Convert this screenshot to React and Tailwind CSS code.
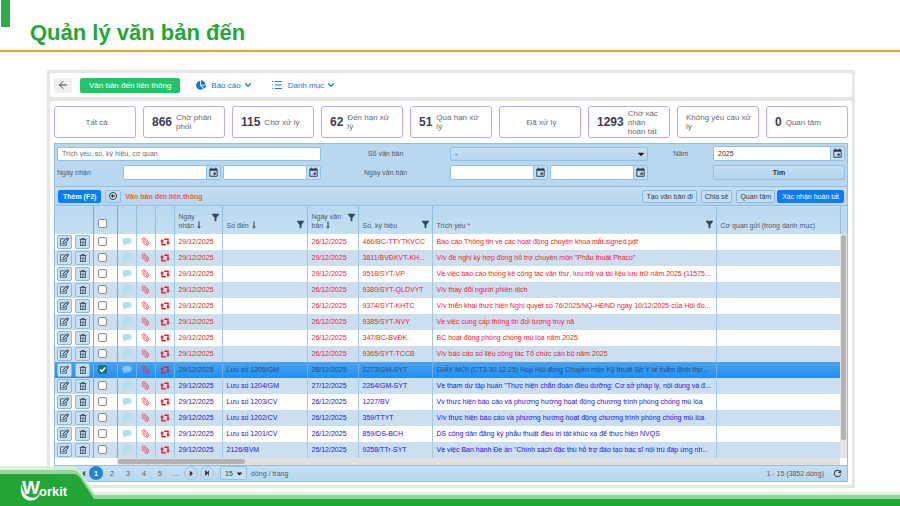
import clsx from "clsx";
import { FaRegEdit, FaRegTrashAlt, FaChartPie, FaLongArrowAltDown, FaStepBackward, FaStepForward, FaCaretLeft, FaCaretRight, FaCaretDown, FaRegArrowAltCircleLeft } from "react-icons/fa";
import { MdEvent, MdFilterAlt, MdRefresh } from "react-icons/md";
import { ArrowLeft, ChevronDown, List, Paperclip } from "lucide-react";

const stats = [
  { label: "Tất cả" },
  { count: 866, label: "Chờ phân phối" },
  { count: 115, label: "Chờ xử lý" },
  { count: 62, label: "Đến hạn xử lý" },
  { count: 51, label: "Quá hạn xử lý" },
  { label: "Đã xử lý" },
  { count: 1293, label: "Chờ xác nhận hoàn tất" },
  { label: "Không yêu cầu xử lý" },
  { count: 0, label: "Quan tâm" },
];

const rows = [
  { received: "29/12/2025", no: "", date: "26/12/2025", code: "466/BC-TTYTKVCC", title: "Báo cáo Thông tin về các hoạt động chuyên khoa mắt.signed.pdf", color: "red" },
  { received: "29/12/2025", no: "", date: "29/12/2025", code: "3811/BVĐKVT-KH...", title: "V/v đề nghị ký hợp đồng hỗ trợ chuyên môn \"Phẫu thuật Phaco\"", color: "red" },
  { received: "29/12/2025", no: "", date: "29/12/2025", code: "9518/SYT-VP", title: "Về việc báo cáo thống kê công tác văn thư, lưu trữ và tài liệu lưu trữ năm 2025 (11575...", color: "red" },
  { received: "29/12/2025", no: "", date: "26/12/2025", code: "9380/SYT-QLDVYT", title: "V/v thay đổi người phiên dịch", color: "red" },
  { received: "29/12/2025", no: "", date: "26/12/2025", code: "9374/SYT-KHTC", title: "V/v triển khai thực hiện Nghị quyết số 76/2025/NQ-HĐND ngày 10/12/2025 của Hội đồ...", color: "red" },
  { received: "29/12/2025", no: "", date: "26/12/2025", code: "9385/SYT-NVY", title: "Về việc cung cấp thông tin đối tượng truy nã", color: "red" },
  { received: "29/12/2025", no: "", date: "26/12/2025", code: "347/BC-BVĐK", title: "BC hoạt động phòng chống mù lòa năm 2025", color: "red" },
  { received: "29/12/2025", no: "", date: "26/12/2025", code: "9365/SYT-TCCB", title: "V/v báo cáo số liệu công tác Tổ chức cán bộ năm 2025", color: "red" },
  { received: "29/12/2025", no: "Lưu số 1205/GM", date: "28/12/2025", code: "2273/GM-SYT", title: "GIẤY MỜI (CT3-30.12.25) Họp Hội đồng Chuyên môn Kỹ thuật Sở Y tế thẩm định thự...", selected: true },
  { received: "29/12/2025", no: "Lưu số 1204/GM", date: "27/12/2025", code: "2264/GM-SYT", title: "Về tham dự tập huấn \"Thực hiện chẩn đoán điều dưỡng: Cơ sở pháp lý, nội dung và đ...", color: "blue" },
  { received: "29/12/2025", no: "Lưu số 1203/CV", date: "26/12/2025", code: "1227/BV", title: "Vv thực hiện báo cáo và phương hướng hoạt động chương trình phòng chống mù lòa", color: "blue" },
  { received: "29/12/2025", no: "Lưu số 1202/CV", date: "26/12/2025", code: "359/TTYT", title: "V/v thực hiện báo cáo và phương hướng hoạt động chương trình phòng chống mù lòa", color: "blue" },
  { received: "29/12/2025", no: "Lưu số 1201/CV", date: "26/12/2025", code: "859/DS-BCH", title: "DS công dân đăng ký phẫu thuật điều trị tật khúc xạ để thực hiện NVQS", color: "blue" },
  { received: "29/12/2025", no: "2126/BVM", date: "25/12/2025", code: "9258/TTr-SYT", title: "Về việc Ban hành Đề án \"Chính sách đặc thù hỗ trợ đào tạo bác sĩ nội trú đáp ứng nh...", color: "blue" },
];

function CommentIcon() {
  return (
    <svg width="10" height="9" viewBox="0 0 10 9" className="mx-auto" fill="currentColor">
      <ellipse cx="5" cy="4" rx="4.6" ry="3.2" />
      <path d="M1.8 5.5C1.9 7 1.4 7.7.8 8.3 2.2 8.3 3.6 7.8 4.4 6.8Z" />
    </svg>
  );
}

function RetweetIcon() {
  return (
    <svg width="10" height="8" viewBox="0 0 10 8" className="mx-auto" fill="none" stroke="currentColor" strokeWidth="1.4">
      <path d="M2 3V6.7H5.8M8 5V1.3H4.2" />
      <path d="M0 3.4 2 .9 4 3.4ZM6 4.6 8 7.1 10 4.6Z" fill="currentColor" stroke="none" />
    </svg>
  );
}

function DateField({ label, value, id }) {
  return (
    <div className="flex h-[15px] min-w-0 flex-1 rounded-[2px] border border-[#93bfe0] bg-white">
      <input id={id} aria-label={label} defaultValue={value} className="min-w-0 flex-1 px-1 text-[#333] outline-none" />
      <button type="button" aria-label={`Chọn ${label}`} className="flex w-[14px] items-center justify-center border-l border-[#93bfe0] bg-[#c3ddf2] text-[#2b3b4b]">
        <MdEvent size={11} />
      </button>
    </div>
  );
}

function HeadCell({ children, filter, sort, top }) {
  return (
    <th className="h-[28px] border-l border-[#93bfe0] px-1 pb-1 text-left align-bottom font-normal">
      <div className={clsx("flex justify-between", top ? "items-start" : "items-end")}>
        <span>
          {children}
          {sort && <FaLongArrowAltDown size={8} className="ml-px inline align-text-bottom" />}
        </span>
        {filter && <MdFilterAlt size={11} className="-mr-[3px] shrink-0 text-[#34475c]" />}
      </div>
    </th>
  );
}

function ToolButton({ children, primary }) {
  return (
    <button
      className={clsx(
        "h-[13px] rounded-[2px] border whitespace-nowrap",
        primary ? "border-[#0a7cff] bg-[#0a7cff] px-1 text-white" : "border-[#8db8da] bg-[#c3def2] px-[3px] text-[#2c3e50]"
      )}
    >
      {children}
    </button>
  );
}

function CheckBox({ label, checked }) {
  return (
    <span className="relative block size-[9px]">
      <input
        type="checkbox"
        aria-label={label}
        defaultChecked={checked}
        className="peer block size-[9px] appearance-none rounded-[2px] border border-[#8a8f96] bg-white checked:border-[#12757c] checked:bg-[#12757c]"
      />
      <svg viewBox="0 0 9 9" className="pointer-events-none absolute inset-0 hidden peer-checked:block">
        <path d="M2 4.6 3.8 6.5 7.2 2.4" fill="none" stroke="#fff" strokeWidth="1.5" />
      </svg>
    </span>
  );
}

function Row({ row }) {
  const cell = "truncate border-l px-1";
  const line = row.selected ? "border-[#6bb3ee]" : "border-[#a3c8e4]";
  return (
    <tr
      className={clsx(
        "h-4",
        row.selected ? "bg-linear-to-b from-[#4aa3e8] to-[#1f8efb] text-[#1c5080]" : "odd:bg-white even:bg-[#cbdff0]",
        row.color === "red" && "text-[#f5192a]",
        row.color === "blue" && "text-[#1c12e8]"
      )}
    >
      <td>
        <div className="flex gap-[3px] pl-[2px]">
          <button aria-label="Sửa" className="flex h-[14px] w-[15px] items-center justify-center rounded-[2px] border border-[#8db8da] bg-[#c9e0f3] text-[#2c3e50]">
            <FaRegEdit size={9} />
          </button>
          <button aria-label="Xóa" className="flex h-[14px] w-[15px] items-center justify-center rounded-[2px] border border-[#8db8da] bg-[#c9e0f3] text-[#2c3e50]">
            <FaRegTrashAlt size={8} />
          </button>
        </div>
      </td>
      <td className={clsx("border-l pl-1", row.selected ? "border-[#6bb3ee]" : "border-[#7fa9c9]")}>
        <CheckBox label="Chọn dòng" checked={row.selected} />
      </td>
      <td className={clsx("border-l", row.selected ? "border-[#6bb3ee] text-[#7cc8f2]" : "border-[#7fa9c9] text-[#b2dfe9]")}>
        <CommentIcon />
      </td>
      <td className={clsx("border-l text-[#e8283a]", line)}>
        <Paperclip size={9} strokeWidth={2} className="mx-auto -scale-x-100" />
      </td>
      <td className={clsx("border-l text-[#ec1c2e]", line)}>
        <RetweetIcon />
      </td>
      <td className={clsx(cell, line)}>{row.received}</td>
      <td className={clsx(cell, line)}>{row.no}</td>
      <td className={clsx(cell, line)}>{row.date}</td>
      <td className={clsx(cell, line)}>{row.code}</td>
      <td className={clsx(cell, line)}>{row.title}</td>
      <td className={clsx(cell, line)}></td>
    </tr>
  );
}

function Footer() {
  return (
    <footer className="pointer-events-none absolute inset-x-0 bottom-0 flex h-[42px] items-end">
      <svg width="110" height="42" viewBox="0 0 110 42" className="shrink-0 font-['Liberation_Sans',Arial,sans-serif]">
        <path d="M0 1H70Q77 1 80 6L95 27H110V42H0Z" fill="#d4f0d2" fillOpacity="0.8" />
        <path d="M0 5H72Q77 5 80 9L94 30H110V42H0Z" fill="#8ed397" fillOpacity="0.9" />
        <path d="M0 9H73Q78 9 81 14L94 34H110V42H0Z" fill="#23a638" />
        <path d="M0 41.5H110" stroke="#128a4e" />
        <path d="M21.5 19C19 28 23 35.5 31 35.5C36 35.5 39.5 32 40 27.5C38 31.5 34.5 33.2 31 32.6C25 31.5 22.5 26 21.5 19Z" fill="#fff" />
        <text x="22" y="29" fill="#fff" fontSize="19" fontWeight="700">W</text>
        <text x="39" y="31" fill="#fff" fontSize="13" fontWeight="700">orkit</text>
      </svg>
      <div className="flex-1">
        <div className="h-[3px] bg-[#dbf3d9]" />
        <div className="h-1 bg-[#93d69b]" />
        <div className="h-[7px] bg-[#23a638]" />
        <div className="h-px bg-[#128a4e]" />
      </div>
    </footer>
  );
}

export default function App() {
  return (
    <div className="relative min-h-screen bg-white pb-[19px] font-['Liberation_Sans',Arial,sans-serif] text-[7px] leading-[9px] text-[#4d5b6b]">
      <header className="flex h-[52px] border-b-2 border-[#f9a12e]">
        <div className="ml-px h-[27px] w-[9px] bg-[#2eac4c]" />
        <h1 className="mt-[19px] ml-5 text-[22px] leading-[27px] font-bold text-[#23a638]">Quản lý văn bản đến</h1>
      </header>

      <main className="mt-[18px] mr-[45px] ml-[47px] flex flex-col gap-1 border-[3px] border-[#e6e7e9] bg-[#e6e7e9]">
        <nav className="flex h-6 items-center rounded-[3px] bg-white px-1 text-[8px] text-[#1a73e0]">
          <button aria-label="Quay lại" className="flex h-[15px] w-[18px] items-center justify-center rounded-[2px] bg-[#f0f0f1] text-[#444]">
            <ArrowLeft size={12} strokeWidth={2} />
          </button>
          <button className="ml-2 h-[15px] rounded-[2px] bg-[#22c56b] px-[9px] text-white shadow-sm">Văn bản đến liên thông</button>
          <button className="ml-4 flex items-center">
            <FaChartPie size={10} />
            <span className="ml-[5px]">Báo cáo</span>
            <ChevronDown size={10} strokeWidth={3} className="ml-[2px]" />
          </button>
          <button className="ml-[18px] flex items-center">
            <List size={12} strokeWidth={2} />
            <span className="ml-[5px]">Danh mục</span>
            <ChevronDown size={10} strokeWidth={3} className="ml-[2px]" />
          </button>
        </nav>

        <section className="rounded-[3px] bg-white px-1 pt-[5px] pb-[3px]">
          <div className="grid grid-cols-9 gap-[7px]">
            {stats.map((s) => (
              <button
                key={s.label}
                className={clsx(
                  "flex h-8 items-center gap-1 rounded-[3px] border border-[#b5aef0] pr-[5px] pl-2 text-left text-[8px] leading-[9px] text-[#666b76]",
                  (s.label === "Tất cả" || s.label === "Đã xử lý") && "justify-center"
                )}
              >
                {s.count !== undefined && <b className="text-[12px] text-[#3f3d56]">{s.count}</b>}
                <span>{s.label}</span>
              </button>
            ))}
          </div>

          <div className="mt-[5px] border border-[#93bfe0] bg-[#b9d8ef]">
            <form className="grid grid-cols-[264px_2fr_198px_1fr_132px] items-center gap-y-1 px-[2px] pt-[2px] pb-[6px]">
              <input
                aria-label="Từ khóa"
                placeholder="Trích yếu, số, ký hiệu, cơ quan"
                className="h-[14px] rounded-[2px] border border-[#93bfe0] bg-white px-1 outline-none placeholder:text-[#6b7280]"
              />
              <label htmlFor="book" className="text-center">Sổ văn bản</label>
              <div className="relative">
                <select id="book" className="h-[14px] w-full appearance-none rounded-[2px] border border-[#93bfe0] bg-linear-to-b from-[#c8e0f3] to-[#b5d4ec] px-1 text-[#333]">
                  <option>-</option>
                </select>
                <FaCaretDown size={10} className="pointer-events-none absolute top-[2px] right-[2px] text-[#222]" />
              </div>
              <label htmlFor="year" className="text-center">Năm</label>
              <DateField id="year" label="năm" value="2025" />

              <div className="flex items-center gap-[2px]">
                <span className="w-[64px]">Ngày nhận</span>
                <DateField label="ngày nhận từ" />
                <DateField label="ngày nhận đến" />
              </div>
              <span className="text-center">Ngày văn bản</span>
              <div className="flex gap-[2px]">
                <DateField label="ngày văn bản từ" />
                <DateField label="ngày văn bản đến" />
              </div>
              <span />
              <button type="button" className="h-[15px] rounded-[2px] border border-[#93bfe0] bg-linear-to-b from-[#c5dff3] to-[#b3d3ec] font-bold text-[#333]">Tìm</button>
            </form>

            <div className="flex h-[19px] items-center gap-1 border-t border-[#93bfe0] bg-linear-to-b from-[#c4ddf1] to-[#b6d6ee] px-[3px]">
              <button className="h-[13px] rounded-[2px] bg-[#0a7cff] px-[5px] font-bold text-white">Thêm (F2)</button>
              <button aria-label="Thu gọn" className="flex h-[13px] w-4 items-center justify-center rounded-[2px] border border-[#93bfe0] text-[#222]">
                <FaRegArrowAltCircleLeft size={8} />
              </button>
              <span className="mr-auto font-bold text-[#e8622a]">Văn bản đến liên thông</span>
              <ToolButton>Tạo văn bản đi</ToolButton>
              <ToolButton>Chia sẻ</ToolButton>
              <div className="flex gap-[2px]">
                <ToolButton>Quan tâm</ToolButton>
                <ToolButton primary>Xác nhận hoàn tất</ToolButton>
              </div>
            </div>

            <div className="flex">
              <table className="w-0 flex-1 table-fixed border-collapse">
                <colgroup>
                  <col className="w-[38px]" />
                  <col className="w-[24px]" />
                  <col className="w-[19px]" />
                  <col className="w-[19px]" />
                  <col className="w-[19px]" />
                  <col className="w-[48px]" />
                  <col className="w-[85px]" />
                  <col className="w-[51px]" />
                  <col className="w-[74px]" />
                  <col className="w-[284px]" />
                  <col />
                </colgroup>
                <thead className="border-t border-[#93bfe0] bg-linear-to-b from-[#b9d8ef] to-[#c6dff2]">
                  <tr>
                    <th />
                    <th className="border-l border-[#7fa9c9] pb-[6px] pl-1 align-bottom">
                      <CheckBox label="Chọn tất cả" />
                    </th>
                    <th className="border-l border-[#7fa9c9]" />
                    <th className="border-l border-[#93bfe0]" />
                    <th className="border-l border-[#93bfe0]" />
                    <HeadCell filter sort top>Ngày nhận</HeadCell>
                    <HeadCell filter sort>Số đến</HeadCell>
                    <HeadCell filter sort top>Ngày văn bản</HeadCell>
                    <HeadCell filter>Số, ký hiệu</HeadCell>
                    <HeadCell filter>Trích yếu <span className="text-[#e8283a]">*</span></HeadCell>
                    <HeadCell>Cơ quan gửi (trong danh mục)</HeadCell>
                  </tr>
                </thead>
                <tbody>
                  {rows.map((row) => (
                    <Row key={row.code} row={row} />
                  ))}
                </tbody>
              </table>
              <div className="flex w-[7px] flex-col bg-[#e3e3e3]">
                <div className="h-[29px] border-t border-l border-[#93bfe0] bg-[#bfdbf0]" />
                <div className="mx-px mt-px h-[205px] rounded-sm bg-[#b3b1b1]" />
              </div>
            </div>

            <div className="flex h-[7px] bg-white pr-[7px] pl-[62px]">
              <div className="flex-1 bg-[#e0e0e0] p-px">
                <div className="h-[5px] w-[127px] rounded-sm bg-[#b3b1b1]" />
              </div>
            </div>

            <div className="flex h-4 items-center border-t border-[#93bfe0] bg-linear-to-b from-[#c5dff3] to-[#b8d7ef] pl-[6px]">
              <button aria-label="Trang đầu" className="w-4"><FaStepBackward size={6} className="mx-auto" /></button>
              <button aria-label="Trang trước" className="w-3"><FaCaretLeft size={9} className="mx-auto" /></button>
              <button className="size-[14px] rounded-full bg-[#2286cf] font-bold text-white">1</button>
              <button className="ml-px w-4">2</button>
              <button className="w-4">3</button>
              <button className="w-4">4</button>
              <button className="w-4">5</button>
              <button className="w-4">...</button>
              <button aria-label="Trang sau" className="flex size-[14px] items-center justify-center rounded-full border border-[#a5c7e2] text-[#333]"><FaCaretRight size={9} /></button>
              <button aria-label="Trang cuối" className="ml-[2px] flex size-[14px] items-center justify-center rounded-full border border-[#a5c7e2] text-[#333]"><FaStepForward size={6} /></button>
              <div className="relative ml-[6px]">
                <select id="size" className="h-[14px] w-[27px] appearance-none rounded-[2px] border border-[#93bfe0] bg-[#c5dff3] px-1 text-[#333]">
                  <option>15</option>
                </select>
                <FaCaretDown size={9} className="pointer-events-none absolute top-[3px] right-[3px] text-[#222]" />
              </div>
              <label htmlFor="size" className="ml-1">dòng / trang</label>
              <span className="ml-auto">1 - 15 (3852 dòng)</span>
              <button aria-label="Tải lại" className="mr-1 ml-2 text-[#333]"><MdRefresh size={11} /></button>
            </div>
          </div>
        </section>
      </main>

      <Footer />
    </div>
  );
}
